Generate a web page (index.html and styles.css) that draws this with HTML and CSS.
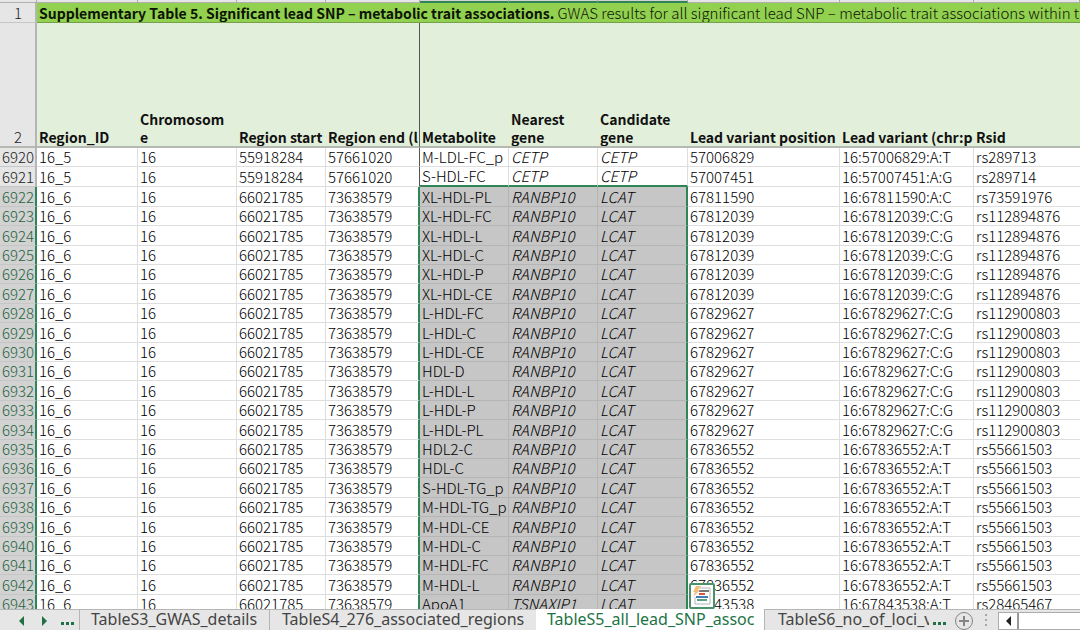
FILE: index.html
```html
<!DOCTYPE html>
<html lang="en">
<head>
<meta charset="utf-8">
<meta name="viewport" content="width=device-width, initial-scale=1">
<title>Supplementary Table 5</title>
<link rel="stylesheet" href="styles.css">
</head>
<body>
<main class="workbook">
  <section class="sheet">
    <table class="grid">
      <colgroup>
        <col class="w-index"><col class="w-region"><col class="w-chrom"><col class="w-start"><col class="w-end"><col class="w-metab"><col class="w-near"><col class="w-cand"><col class="w-pos"><col class="w-variant"><col>
      </colgroup>
      <thead>
        <tr class="letters" aria-hidden="true"><td></td><td></td><td></td><td></td><td></td><td class="picked"></td><td class="picked"></td><td class="picked"></td><td></td><td></td><td></td></tr>
        <tr class="title">
          <th class="index" scope="row">1</th>
          <td colspan="10"><b>Supplementary Table 5. Significant lead SNP – metabolic trait associations.</b> GWAS results for all significant lead SNP – metabolic trait associations within t</td>
        </tr>
        <tr class="heads">
          <th class="index" scope="row">2</th>
          <th scope="col">Region_ID</th>
          <th scope="col">Chromosom<br>e</th>
          <th scope="col">Region start</th>
          <th scope="col" class="frozen">Region end (l</th>
          <th scope="col">Metabolite</th>
          <th scope="col">Nearest<br>gene</th>
          <th scope="col">Candidate<br>gene</th>
          <th scope="col">Lead variant position</th>
          <th scope="col">Lead variant (chr:p</th>
          <th scope="col">Rsid</th>
        </tr>
      </thead>
      <tbody id="rows"></tbody>
    </table>
    <button class="quick" type="button" aria-label="Quick analysis">
      <svg width="20" height="20" viewBox="0 0 20 20">
        <path d="M7 2h11v16H3v-7" fill="none" stroke="#b5b5b5"/>
        <path d="M7 4h10v2H7z" fill="#777"/>
        <path d="M7 7h6v2H7z" fill="#d9553b"/>
        <path d="M4 10h12v2H4z" fill="#3f7fc0"/>
        <path d="M5 13h10v2H5z" fill="#5d9c86"/>
        <path d="M4 0h5L6 4h2L1 11l2-5H1z" fill="#f2be79"/>
      </svg>
    </button>
  </section>
  <nav class="tabs" aria-label="Sheets">
    <div class="nav">
      <button type="button" aria-label="Previous sheet"><svg width="6" height="10" viewBox="0 0 6 10"><path d="M6 0v10L1 5z"/></svg></button>
      <button type="button" aria-label="Next sheet"><svg width="6" height="10" viewBox="0 0 6 10"><path d="M1 0v10l5-5z"/></svg></button>
      <button type="button" aria-label="More sheets" class="more"><i></i><i></i><i></i></button>
    </div>
    <button type="button" class="tab first">TableS3_GWAS_details</button>
    <button type="button" class="tab second">TableS4_276_associated_regions</button>
    <button type="button" class="tab active" aria-current="page">TableS5_all_lead_SNP_assoc</button>
    <button type="button" class="tab last">TableS6_no_of_loci_v</button>
    <button type="button" aria-label="More sheets" class="more"><i></i><i></i><i></i></button>
    <button type="button" class="add" aria-label="New sheet"><svg width="20" height="20" viewBox="0 0 20 20"><circle cx="10" cy="11" r="8.5"/><path class="plus" d="M10 6v10M5 11h10"/></svg></button>
    <span class="grip"><i></i><i></i><i></i></span>
    <div class="scroll">
      <button type="button" aria-label="Scroll left"><svg width="6" height="10" viewBox="0 0 6 10"><path d="M6 0v10L1 5z"/></svg></button>
      <span class="thumb"></span>
    </div>
  </nav>
</main>
<script src="script.js"></script>
</body>
</html>
```
FILE: styles.css
```css
* { box-sizing: border-box; }
body {
  margin: 0;
  font-family: "Noto Sans CJK SC", "Noto Sans", sans-serif;
  font-size: 15px;
  font-weight: 300;
  color: #000;
}
button { margin: 0; padding: 0; border: 0; background: none; font: inherit; color: inherit; }
.workbook { display: flex; flex-direction: column; height: 100vh; }
.sheet { position: relative; flex: 1; min-height: 0; overflow: hidden; background: #fff; }

.grid { width: 100%; table-layout: fixed; border-collapse: separate; border-spacing: 0; }
.w-index { width: 37px; }
.w-region { width: 101px; }
.w-chrom { width: 99px; }
.w-start { width: 89px; }
.w-end { width: 94px; }
.w-metab, .w-near { width: 89px; }
.w-cand { width: 90px; }
.w-pos { width: 152px; }
.w-variant { width: 134px; }

.grid td, .grid th { padding: 0 0 0 2px; overflow: hidden; white-space: nowrap; text-align: left; line-height: 18px; }
.letters td { height: 3px; background: #e6e6e6; border-right: 1px solid #ababab; border-bottom: 1px solid #b0b0b0; }
.letters .picked { background: #d2d2d2; border-bottom: 2px solid #2f8555; }

.grid .index {
  padding: 0 0 0 1px;
  text-align: center;
  font-weight: 300;
  color: #222;
  background: #e6e6e6;
  border-right: 2px solid #b5b5b5;
  border-bottom: 1px solid #c6c6c6;
}
.grid .title > * { height: 20px; padding-top: 1px; }
.title td { background: #92d050; border-bottom: 1px solid #769f4b; color: #0c1405; }
.title b { font-size: 14px; font-weight: 700; }
.grid .heads th { height: 125px; vertical-align: bottom; line-height: 18px; border-bottom: 2px solid #b5b9b2; }
.grid .heads th:not(.index) { background: #e2efda; color: #111; font-size: 14px; font-weight: 700; }
.grid .frozen, .grid td.frozen { border-right: 1px solid #555; }

#rows td, #rows th { height: 19px; border-bottom: 1px solid #dedede; }
#rows tr:nth-child(5n+3) > *, #rows tr:nth-child(5n) > * { height: 20px; }
#rows td { border-right: 1px solid #dedede; }
#rows td:last-child { border-right: 0; }
#rows td.frozen { border-right-color: #555; }
#rows th { border-bottom-color: #c6c6c6; }
#rows .gene { font-style: italic; }
#rows .chosen th { background: #d2d2d2; color: #1f6340; border-right-color: #2f8555; }
#rows .chosen .frozen { border-right: 2px solid #2f8555; }
#rows .chosen .pick { background: #c6c6c6; border-color: #b5b5b5; }
#rows .chosen .edge { border-right: 2px solid #2f8555; }
#rows .before .pick { border-bottom: 2px solid #2f8555; }

.quick {
  position: absolute;
  left: 689px;
  bottom: 0;
  display: grid;
  place-items: center;
  width: 26px;
  height: 26px;
  background: #fff;
  border: 2px solid #4b9069;
  border-radius: 2px;
}

.tabs {
  display: flex;
  height: 21px;
  background: #e6e6e6;
  border-top: 1px solid #b5b5b5;
  font-family: "Noto Sans", sans-serif;
  font-size: 16px;
  font-weight: 400;
  line-height: 18px;
  color: #444;
}
.nav { display: flex; align-items: center; gap: 17px; width: 80px; padding-left: 18px; padding-top: 2px; border-right: 1px solid #b5b5b5; }
.nav button { display: flex; }
.nav svg { fill: #1e7145; }
.more { display: flex; flex: none; align-items: center; gap: 2px; padding-top: 6px; }
.nav .more { padding-top: 4px; margin-left: -3px; }
.more i { width: 3px; height: 3px; background: #1e7145; }
.tab { display: block; flex: none; overflow: hidden; white-space: nowrap; text-align: left; padding: 0 0 2px 11px; }
.first { width: 190px; border-right: 1px solid #b5b5b5; }
.second { width: 266px; padding-left: 12px; }
.active { width: 228px; background: #fff; color: #217346; margin-top: -1px; padding-bottom: 1px; }
.last { width: 165px; padding-left: 13px; border-left: 1px solid #b5b5b5; margin-right: 4px; }
.add { display: flex; flex: none; margin-left: 8px; align-items: center; }
.add svg { fill: none; stroke: #858585; }
.plus { stroke-width: 2; }
.grip { display: flex; flex-direction: column; justify-content: center; gap: 3px; margin: 0 11px; }
.grip i { width: 2px; height: 2px; background: #a6a6a6; }
.scroll { display: flex; flex: 1; margin-top: 2px; border: 1px solid #ababab; border-right: 0; }
.scroll button { display: grid; place-items: center; width: 18px; background: #fff; }
.scroll svg { fill: #222; }
.thumb { flex: 1; background: #fff; border-left: 2px solid #999; }
```
FILE: script.js
```js
// chromosome, start and end are shared inside a region
const regions = {
  "16_5": ["16", "55918284", "57661020"],
  "16_6": ["16", "66021785", "73638579"]
};

// region, metabolite, nearest gene, candidate gene, position, alleles, rsid
const records = [
  ["16_5", "M-LDL-FC_p", "CETP", "CETP", "57006829", "A:T", "rs289713"],
  ["16_5", "S-HDL-FC", "CETP", "CETP", "57007451", "A:G", "rs289714"],
  ["16_6", "XL-HDL-PL", "RANBP10", "LCAT", "67811590", "A:C", "rs73591976"]
];
const group = (names, position, alleles, rsid) =>
  names.forEach(name => records.push(["16_6", name, "RANBP10", "LCAT", position, alleles, rsid]));
group(["XL-HDL-FC", "XL-HDL-L", "XL-HDL-C", "XL-HDL-P", "XL-HDL-CE"], "67812039", "C:G", "rs112894876");
group(["L-HDL-FC", "L-HDL-C", "L-HDL-CE", "HDL-D", "L-HDL-L", "L-HDL-P", "L-HDL-PL"], "67829627", "C:G", "rs112900803");
group(["HDL2-C", "HDL-C", "S-HDL-TG_p", "M-HDL-TG_p", "M-HDL-CE", "M-HDL-C", "M-HDL-FC", "M-HDL-L"], "67836552", "A:T", "rs55661503");
records.push(["16_6", "ApoA1", "TSNAXIP1", "LCAT", "67843538", "A:T", "rs28465467"]);

const FIRST_ROW = 6920;
const FIRST_CHOSEN = 2;
const classes = ["", "", "", "frozen", "pick", "pick gene", "pick gene edge", "", "", ""];
const body = document.getElementById("rows");

records.forEach(([region, metabolite, nearest, candidate, position, alleles, rsid], i) => {
  const row = body.insertRow();
  row.className = i >= FIRST_CHOSEN ? "chosen" : i === FIRST_CHOSEN - 1 ? "before" : "";
  const head = document.createElement("th");
  head.scope = "row";
  head.className = "index";
  head.textContent = FIRST_ROW + i;
  row.append(head);
  const [chromosome, start, end] = regions[region];
  const variant = `${chromosome}:${position}:${alleles}`;
  [region, chromosome, start, end, metabolite, nearest, candidate, position, variant, rsid].forEach((text, c) => {
    const cell = row.insertCell();
    cell.className = classes[c];
    cell.textContent = text;
  });
});
```
